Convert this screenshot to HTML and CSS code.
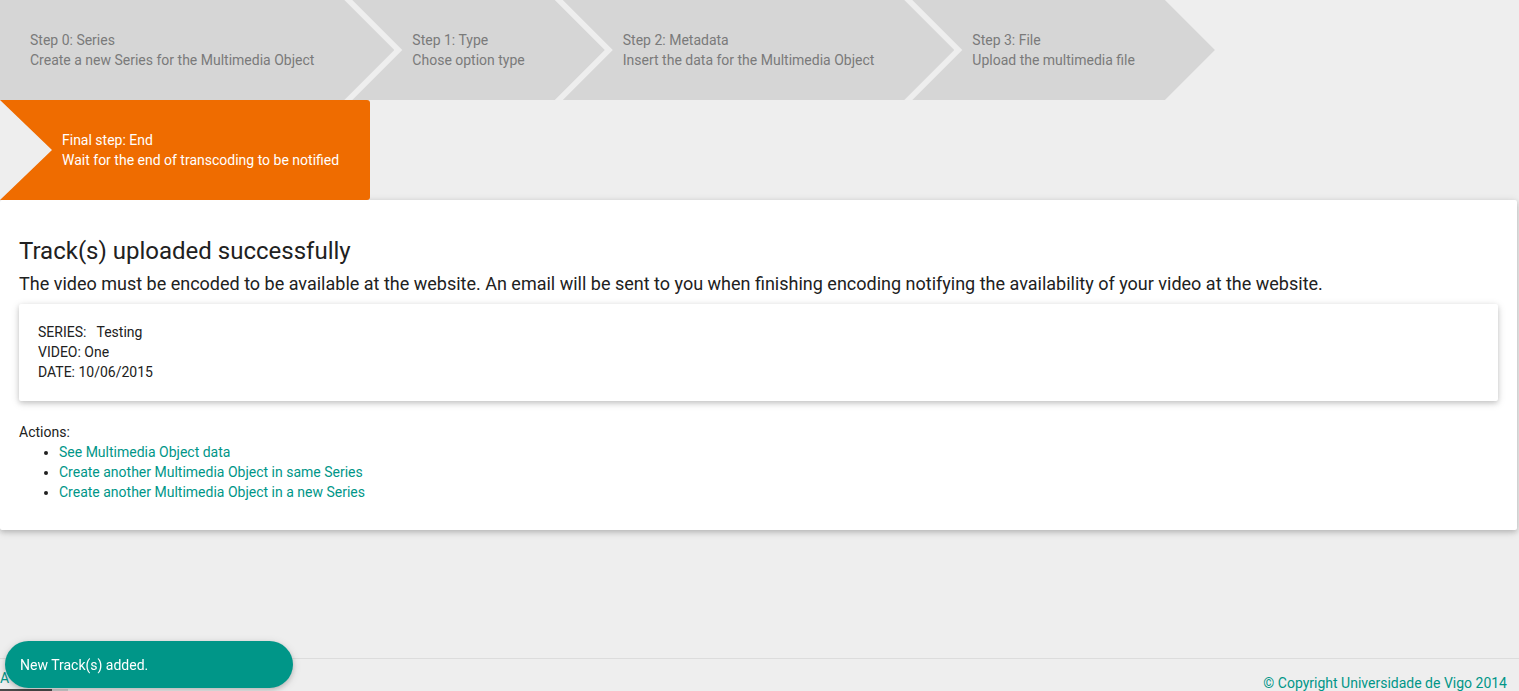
FILE: index.html
```html
<!DOCTYPE html>
<html lang="en">
<head>
<meta charset="utf-8">
<title>Upload finished</title>
<link rel="stylesheet" href="styles.css">
</head>
<body>
<div class="page">
  <nav class="steps">
    <div class="step step-first">
      <div class="step-title">Step 0: Series</div>
      <div class="step-desc">Create a new Series for the Multimedia Object</div>
    </div>
    <div class="step">
      <div class="step-title">Step 1: Type</div>
      <div class="step-desc">Chose option type</div>
    </div>
    <div class="step">
      <div class="step-title">Step 2: Metadata</div>
      <div class="step-desc">Insert the data for the Multimedia Object</div>
    </div>
    <div class="step">
      <div class="step-title">Step 3: File</div>
      <div class="step-desc">Upload the multimedia file</div>
    </div>
  </nav>
  <div class="steps-row2">
    <div class="step step-final">
      <div class="step-title">Final step: End</div>
      <div class="step-desc">Wait for the end of transcoding to be notified</div>
    </div>
  </div>

  <main class="card">
    <h2 class="card-title">Track(s) uploaded successfully</h2>
    <p class="card-lead">The video must be encoded to be available at the website. An email will be sent to you when finishing encoding notifying the availability of your video at the website.</p>
    <div class="summary">
      <div>SERIES:&nbsp;&nbsp; Testing</div>
      <div>VIDEO: One</div>
      <div>DATE: 10/06/2015</div>
    </div>
    <div class="actions">
      <div>Actions:</div>
      <ul class="actions-list">
        <li><a href="#">See Multimedia Object data</a></li>
        <li><a href="#">Create another Multimedia Object in same Series</a></li>
        <li><a href="#">Create another Multimedia Object in a new Series</a></li>
      </ul>
    </div>
  </main>

  <footer class="footer">
    <div class="footer-left">
      <a href="#" class="footer-link">A</a>
      <div class="footer-bar"><span class="bar-dark"></span><span class="bar-light"></span></div>
    </div>
    <div class="footer-copy">&copy; Copyright Universidade de Vigo 2014</div>
  </footer>
</div>

<div class="toast">New Track(s) added.</div>
</body>
</html>
```

FILE: styles.css
```css
* { box-sizing: border-box; }

html, body {
  margin: 0;
  padding: 0;
}

body {
  background: #eeeeee;
  font-family: Roboto, "Noto Sans", sans-serif;
  font-size: 14px;
  line-height: 20px;
  color: #212121;
  overflow: hidden;
}

a { color: #009688; text-decoration: none; }

.steps {
  display: flex;
  height: 100px;
}

.step {
  height: 100px;
  background: #d6d6d6;
  color: #7a7a7a;
  display: flex;
  flex-direction: column;
  justify-content: center;
  padding: 0 80px 0 60px;
  margin-left: -42px;
  clip-path: polygon(0 0, calc(100% - 50px) 0, 100% 50%, calc(100% - 50px) 100%, 0 100%, 50px 50%);
}

.step-first {
  margin-left: 0;
  padding-left: 30px;
  clip-path: polygon(0 0, calc(100% - 50px) 0, 100% 50%, calc(100% - 50px) 100%, 0 100%);
}

.steps-row2 {
  display: flex;
  height: 100px;
}

.step-final {
  margin-left: 0;
  height: 100px;
  background: #ef6c00;
  color: #ffffff;
  padding: 0 31px 0 62px;
  border-radius: 0 3px 3px 0;
  clip-path: polygon(0 0, 100% 0, 100% 100%, 0 100%, 52px 50%);
}

.card {
  background: #ffffff;
  margin: 0 2px 0 0;
  padding: 36px 19px 28px;
  box-shadow: 0 2px 5px 0 rgba(0,0,0,0.16), 0 2px 10px 0 rgba(0,0,0,0.12);
  border-radius: 2px;
}

.card-title {
  margin: 0;
  font-size: 24px;
  font-weight: 400;
  line-height: 30px;
  color: #212121;
}

.card-lead {
  margin: 4px 0 0;
  font-size: 18px;
  line-height: 28px;
  color: #212121;
}

.summary {
  margin-top: 6px;
  padding: 18px 19px 19px;
  background: #ffffff;
  border-radius: 2px;
  box-shadow: 0 2px 5px 0 rgba(0,0,0,0.16), 0 2px 10px 0 rgba(0,0,0,0.12);
}

.actions {
  margin-top: 21px;
}

.actions-list {
  margin: 0;
  padding-left: 40px;
}

.footer {
  margin-top: 128px;
  border-top: 1px solid #dcdcdc;
  display: flex;
  justify-content: space-between;
  padding: 10px 12px 0 0;
  height: 80px;
}

.footer-left {
  display: flex;
  flex-direction: column;
}

.footer-link {
  line-height: 18px;
  font-size: 14px;
}

.footer-bar {
  display: flex;
  margin-top: 2px;
  height: 4px;
}

.bar-dark { width: 52px; background: #4a4a4a; }
.bar-light { width: 16px; background: #d0d0d0; }

.footer-copy {
  color: #009688;
  padding-top: 4px;
}

.toast {
  position: fixed;
  left: 5px;
  top: 641px;
  width: 288px;
  height: 47px;
  border-radius: 24px;
  background: #009688;
  color: #ffffff;
  display: flex;
  align-items: center;
  padding-left: 15px;
  font-size: 14px;
  box-shadow: 0 2px 5px 0 rgba(0,0,0,0.16), 0 2px 10px 0 rgba(0,0,0,0.12);
}
```
